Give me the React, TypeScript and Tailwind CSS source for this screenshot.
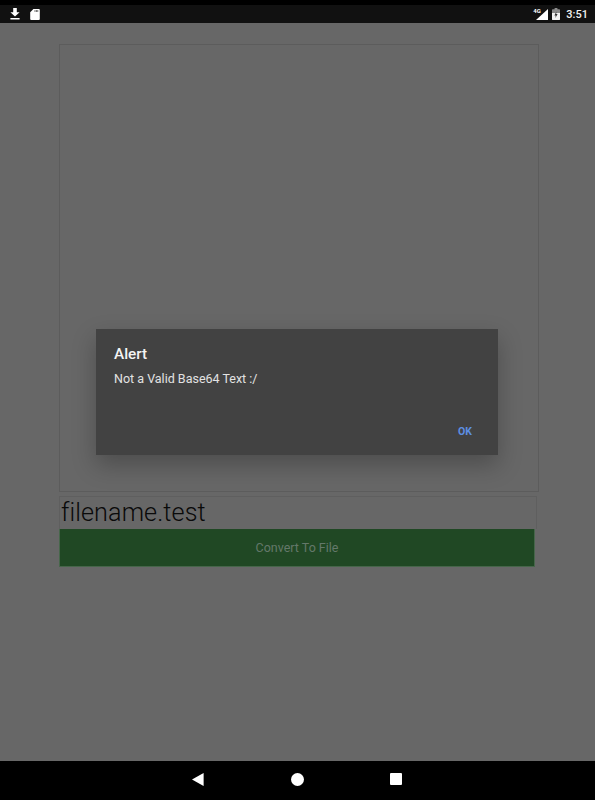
import React from 'react';

const font = { fontFamily: 'Roboto, sans-serif' };

const StatusBar = () => (
  <div className="h-[23px] shrink-0 bg-[#111111] border-t-[5px] border-black flex items-center justify-between pl-[10px] pr-[7px]">
    <div className="flex items-center gap-[10px]">
      <svg width="10" height="12" viewBox="0 0 10 12" fill="#fff">
        <path d="M3.2 0h3.6v4.2H9.6L5 8.6.4 4.2h2.8z" />
        <rect x="0.4" y="10" width="9.2" height="1.5" />
      </svg>
      <svg width="10" height="11" viewBox="0 0 10 11" fill="#fff">
        <path d="M3.4 0H8.8A1 1 0 0 1 9.8 1V10A1 1 0 0 1 8.8 11H1.2A1 1 0 0 1 .2 10V3.2z" />
        <path d="M4.6 1h.8v2h-.8zM6 1h.8v2H6zM7.4 1h.8v2h-.8z" fill="#555" />
      </svg>
    </div>
    <div className="flex items-center">
      <div className="relative w-[12px] h-[11px] mr-[4px]">
        <svg width="12" height="11" viewBox="0 0 12 11" className="absolute left-0 top-0">
          <path d="M0 11 L12 0 V11z" fill="#fff" />
        </svg>
        <span className="absolute left-[-3px] top-[-1px] text-[6px] font-bold leading-[6px] text-white">4G</span>
      </div>
      <svg width="8" height="12" viewBox="0 0 8 12" className="mr-[6px]">
        <path d="M2.6 0h2.8v1.2H7.2a.8.8 0 0 1 .8.8v9.2a.8.8 0 0 1-.8.8H.8a.8.8 0 0 1-.8-.8V2a.8.8 0 0 1 .8-.8h1.8z" fill="#8c8c8c" />
        <path d="M0 5h8v6.2a.8.8 0 0 1-.8.8H.8a.8.8 0 0 1-.8-.8z" fill="#f4f4f4" />
        <path d="M4.4 3.6 2.4 7.4h1.3L3.4 10l2.2-3.9H4.2z" fill="#333" />
      </svg>
      <span className="text-[11px] font-medium leading-none text-[#f2f2f2]">3:51</span>
    </div>
  </div>
);

const NavBar = () => (
  <div className="h-[39px] shrink-0 bg-black flex items-center justify-center pb-[3px] pr-[2px]">
    <svg width="12" height="13" viewBox="0 0 12 13" fill="#fff" className="mr-[87px]">
      <path d="M0 6.5 11.6 0v13z" />
    </svg>
    <div className="w-[13px] h-[13px] rounded-full bg-white mr-[86px]" />
    <div className="w-[12px] h-[12px] rounded-[1px] bg-white" />
  </div>
);

export default function App() {
  return (
    <div className="relative w-[595px] h-[800px] flex flex-col overflow-hidden bg-[#676767]" style={font}>
      <StatusBar />

      <div className="flex-1 flex flex-col pl-[59px] pt-[21px]">
        <div className="w-[480px] h-[448px] border border-[#5c5c5c]" />
        <div className="w-[478px] h-[33px] mt-[4px] border border-b-0 border-[#5f5f5f] flex items-center pl-[1px]">
          <span className="text-[25.2px] font-light leading-none text-[#0a0a0a] tracking-[0.1px]">filename.test</span>
        </div>
        <div className="w-[476px] h-[38px] pt-[2px] bg-[#204824] border-l border-r border-b border-[#46664a] flex items-center justify-center">
          <span className="text-[12.5px] text-[#64786a]">Convert To File</span>
        </div>
      </div>

      <NavBar />

      {/* alert dialog */}
      <div className="absolute left-[96px] top-[329px] w-[402px] h-[126px] bg-[#424242] shadow-[0_10px_22px_rgba(0,0,0,0.25)] flex flex-col">
        <div className="pl-[18px] pt-[16px] text-[15.3px] font-medium leading-[18px] text-[#f4f4f4]">Alert</div>
        <div className="pl-[18px] pt-[8px] text-[12.5px] leading-[16px] text-[#e2e2e2]">Not a Valid Base64 Text :/</div>
        <div className="mt-auto self-end pr-[26px] pb-[16px] text-[10.5px] font-bold leading-[14px] text-[#5d8fe3]">OK</div>
      </div>
    </div>
  );
}
